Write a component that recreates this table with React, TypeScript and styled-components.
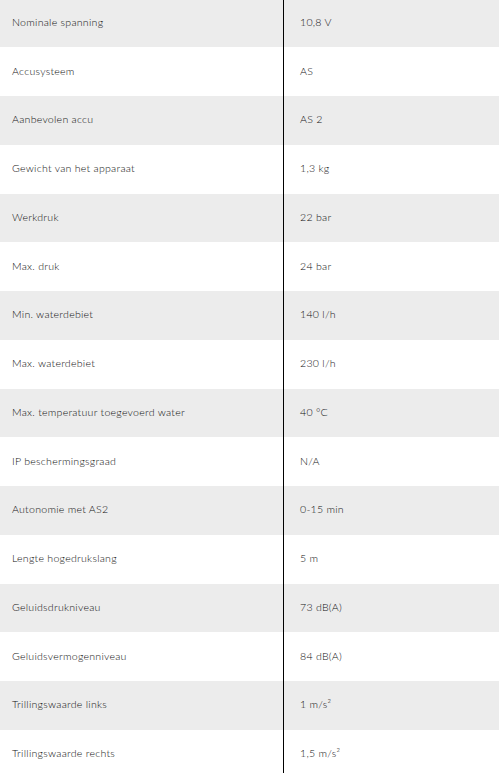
import React from "react";
import styled, { createGlobalStyle } from "styled-components";

const Global = createGlobalStyle`
  html, body { margin: 0; padding: 0; background: #fff; }
  body { font-family: Lato, "Noto Sans", sans-serif; overflow: hidden; }
`;

const Table = styled.div`
  display: flex;
  flex-direction: column;
  margin-top: -1.5px;
`;

const Row = styled.div<{ $shaded: boolean }>`
  display: grid;
  grid-template-columns: 283px 1fr;
  height: 48.75px;
  background: ${(p) => (p.$shaded ? "#ececec" : "#ffffff")};
`;

const Cell = styled.div`
  display: flex;
  align-items: center;
  padding-bottom: 2px;
  font-size: 10.6px;
  font-weight: 300;
  color: #111;
  letter-spacing: 0.25px;
`;

const Label = styled(Cell)`
  padding-left: 12px;
`;

const Value = styled(Cell)`
  padding-left: 16px;
  border-left: 1px solid #000;
`;

const rows: [string, string][] = [
  ["Nominale spanning", "10,8 V"],
  ["Accusysteem", "AS"],
  ["Aanbevolen accu", "AS 2"],
  ["Gewicht van het apparaat", "1,3 kg"],
  ["Werkdruk", "22 bar"],
  ["Max. druk", "24 bar"],
  ["Min. waterdebiet", "140 l/h"],
  ["Max. waterdebiet", "230 l/h"],
  ["Max. temperatuur toegevoerd water", "40 °C"],
  ["IP beschermingsgraad", "N/A"],
  ["Autonomie met AS2", "0-15 min"],
  ["Lengte hogedrukslang", "5 m"],
  ["Geluidsdrukniveau", "73 dB(A)"],
  ["Geluidsvermogenniveau", "84 dB(A)"],
  ["Trillingswaarde links", "1 m/s²"],
  ["Trillingswaarde rechts", "1,5 m/s²"],
];

export default function App() {
  return (
    <>
      <Global />
      <Table>
        {rows.map(([k, v], i) => (
          <Row key={k} $shaded={i % 2 === 0}>
            <Label>{k}</Label>
            <Value>{v}</Value>
          </Row>
        ))}
      </Table>
    </>
  );
}
